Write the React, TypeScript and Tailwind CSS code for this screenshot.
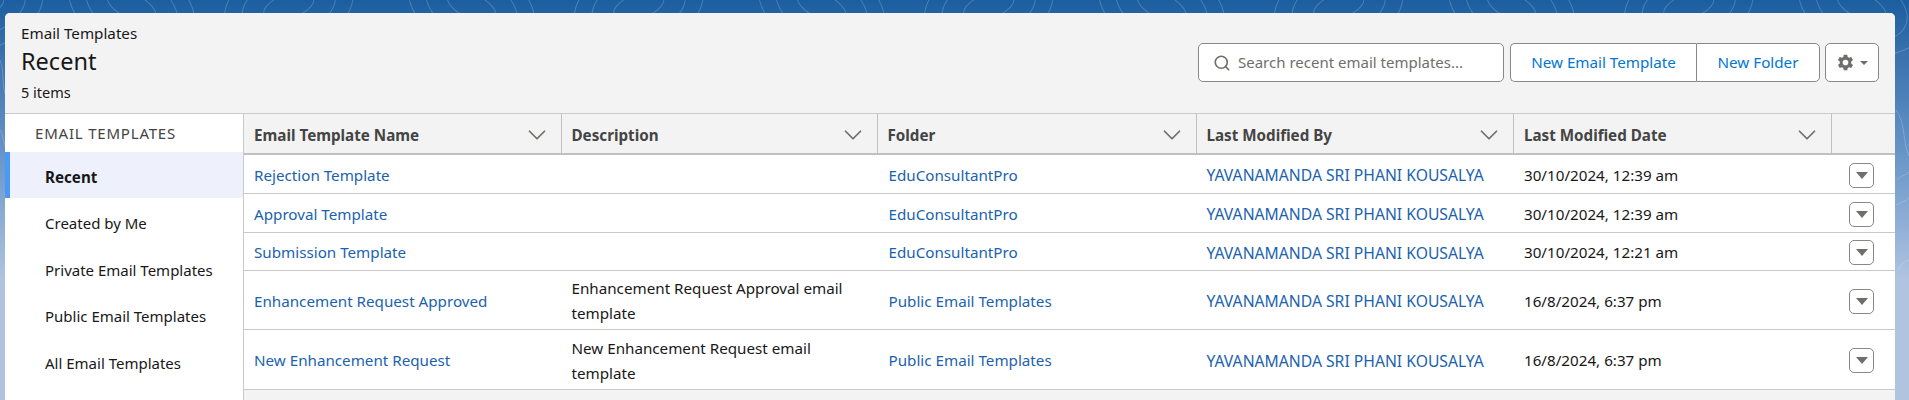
import { ChevronDown, Search } from 'lucide-react';

const COLUMNS = ['Email Template Name', 'Description', 'Folder', 'Last Modified By', 'Last Modified Date'];
const OWNER = 'YAVANAMANDA SRI PHANI KOUSALYA';

const ROWS = [
  { name: 'Rejection Template', desc: '', folder: 'EduConsultantPro', date: '30/10/2024, 12:39 am', h: 'h-[39px]' },
  { name: 'Approval Template', desc: '', folder: 'EduConsultantPro', date: '30/10/2024, 12:39 am', h: 'h-[39px]' },
  { name: 'Submission Template', desc: '', folder: 'EduConsultantPro', date: '30/10/2024, 12:21 am', h: 'h-[38px]' },
  { name: 'Enhancement Request Approved', desc: 'Enhancement Request Approval email template', folder: 'Public Email Templates', date: '16/8/2024, 6:37 pm', h: 'h-[59px]' },
  { name: 'New Enhancement Request', desc: 'New Enhancement Request email template', folder: 'Public Email Templates', date: '16/8/2024, 6:37 pm', h: 'h-[60px]' },
];

const NAV = ['Recent', 'Created by Me', 'Private Email Templates', 'Public Email Templates', 'All Email Templates'];

const GRID = 'grid grid-cols-[317.5px_316px_319px_317.5px_317.5px_minmax(0,1fr)]';

// topographic lines behind the panel, only the edges show
function Backdrop() {
  const centers = [-20, 130, 290, 470, 640, 820, 990, 1160, 1340, 1510, 1690, 1860];
  return (
    <svg className="absolute inset-0 h-full w-full" viewBox="0 0 1909 400" fill="none" stroke="#ffffff" strokeOpacity="0.2" strokeWidth="1">
      {centers.map((x, i) => (
        <g key={x} transform={`rotate(${i % 2 ? 24 : -18} ${x} 10)`}>
          <ellipse cx={x} cy="6" rx="26" ry="12" />
          <ellipse cx={x} cy="6" rx="48" ry="30" />
          <ellipse cx={x} cy="6" rx="66" ry="44" />
        </g>
      ))}
      <path d="M1896 110c10 14 6 30 13 46M1897 180c6-6 8-4 12-8M1896 205c6-4 10-3 13-7M1898 270c6-10 8-8 11-10" />
      <path d="M0 60c4 10 2 22 5 34M0 130c3 4 3 10 5 16" />
    </svg>
  );
}

function GearMenu() {
  return (
    <button className="ml-[5px] flex h-[39px] w-[54px] items-center justify-center gap-[6px] rounded-[5px] border border-[#8a8886] bg-white">
      <svg width="17" height="17" viewBox="0 0 24 24" fill="#706e6b">
        <path fillRule="evenodd" d="M9.500 1h5l.6 3.200 1.900 1.100 3.100-1.100 2.500 4.300-2.500 2.100v2.800l2.500 2.100-2.500 4.300-3.100-1.100-1.900 1.100-.6 3.200h-5l-.6-3.200-1.900-1.100-3.100 1.100-2.500-4.300 2.500-2.100v-2.800L1.400 8.500l2.500-4.300L7 5.300l1.900-1.100zM12 8a4 4 0 1 0 0 8 4 4 0 0 0 0-8z" />
      </svg>
      <span className="h-0 w-0 border-x-[4px] border-t-[4px] border-x-transparent border-t-[#706e6b]" />
    </button>
  );
}

function RowAction() {
  return (
    <button className="flex h-[25px] w-[25px] items-center justify-center rounded-[5px] border border-[#8a8886] bg-white">
      <span className="h-0 w-0 border-x-[6px] border-t-[7px] border-x-transparent border-t-[#706e6b]" />
    </button>
  );
}

export default function App() {
  return (
    <div className="relative h-[400px] w-[1909px] overflow-hidden bg-gradient-to-b from-[#1b5e9f] via-[#6b97c9] via-40% to-[#b0c4e0] to-70% pl-[5px] pr-[14px] pt-[13px] font-['Noto_Sans',sans-serif] text-[15.2px] text-[#181818]">
      <Backdrop />
      <div className="relative flex h-[400px] flex-col overflow-hidden rounded-t-[5px] bg-white">
        <header className="flex h-[101px] shrink-0 items-start justify-between border-b border-[#c9c9c9] bg-[#f3f3f3] pl-[16px] pr-[16px]">
          <div className="pt-[10px]">
            <div className="leading-[20px]">Email Templates</div>
            <h1 className="mt-[2px] text-[23.500px] leading-[32px]">Recent</h1>
            <div className="mt-[5px] text-[14.500px] leading-[20px]">5 items</div>
          </div>
          <div className="mt-[30px] flex items-start">
            <label className="mr-[6px] flex h-[39px] w-[306px] items-center gap-[7px] rounded-[5px] border border-[#8a8886] bg-white pl-[14px]">
              <Search className="h-[18px] w-[18px] text-[#706e6b]" strokeWidth={2.2} />
              <span className="text-[15px] text-[#706e6b]">Search recent email templates...</span>
            </label>
            <button className="flex h-[39px] w-[186px] items-center justify-center rounded-l-[5px] border border-r-0 border-[#8a8886] bg-white text-[#0176d3]">New Email Template</button>
            <button className="flex h-[39px] w-[124px] items-center justify-center rounded-r-[5px] border border-[#8a8886] bg-white text-[#0176d3]">New Folder</button>
            <GearMenu />
          </div>
        </header>
        <div className="flex min-h-0 flex-1">
          <nav className="w-[239px] shrink-0 border-r border-[#c9c9c9] bg-white">
            <div className="flex h-[38px] items-center pl-[30px] text-[15px] tracking-[0.8px] text-[#444444]">EMAIL TEMPLATES</div>
            {NAV.map((item, i) => (
              <div key={item} className={i === 0 ? 'flex h-[46px] items-center border-l-[5px] border-[#4a9af5] bg-[#eef1fc] pl-[35px] pt-[5px] font-bold' : 'flex h-[46.4px] items-center pl-[40px] pt-[5px] text-[15px]'}>
                {item}
              </div>
            ))}
          </nav>
          <main className="min-w-0 flex-1 bg-[#f3f3f3]">
            <div className={`${GRID} h-[41px] border-b-2 border-[#c0c0c0]`}>
              {COLUMNS.map((col) => (
                <div key={col} className="flex h-[39px] items-center justify-between border-r border-[#c0c0c0] pl-[10px] pr-[9px] pt-[3px] font-bold text-[#444444]">
                  <span>{col}</span>
                  <ChevronDown className="h-[30px] w-[30px] text-[#706e6b]" strokeWidth={1.4} />
                </div>
              ))}
              <div />
            </div>
            {ROWS.map((row) => (
              <div key={row.name} className={`${GRID} ${row.h} items-center border-b border-[#c9c9c9] bg-white pt-[2px]`}>
                <a className="pl-[10px] text-[#1b62ae]">{row.name}</a>
                <div className="pl-[10px] pr-[20px] leading-[25px]">{row.desc}</div>
                <a className="pl-[11px] text-[#1b62ae]">{row.folder}</a>
                <a className="pl-[10px] pt-[2px] text-[15.700px] text-[#1b62ae]">{OWNER}</a>
                <div className="pl-[10px]">{row.date}</div>
                <div className="flex justify-end pr-[21px]">
                  <RowAction />
                </div>
              </div>
            ))}
          </main>
        </div>
      </div>
    </div>
  );
}
